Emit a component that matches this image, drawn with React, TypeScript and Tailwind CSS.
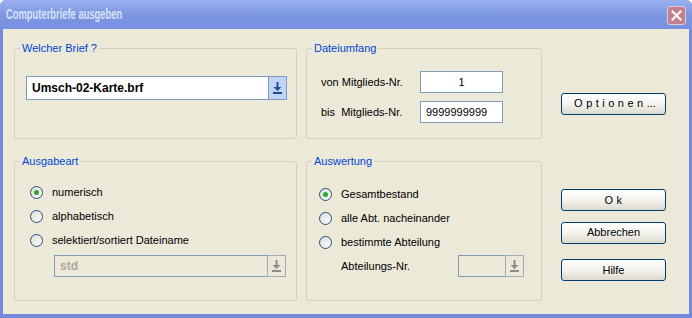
import React from 'react';

const FONT = { fontFamily: '"Liberation Sans", Arial, sans-serif' };

const ArrowIcon: React.FC<{ color: string }> = ({ color }) => (
  <svg width="9" height="12" viewBox="0 0 9 12">
    <rect x="3.5" y="0" width="2" height="6" fill={color} />
    <polygon points="0.5,5 8.5,5 4.5,9" fill={color} />
    <rect x="0" y="10" width="9" height="2" fill={color} />
  </svg>
);

const Radio: React.FC<{ checked?: boolean }> = ({ checked }) => (
  <span className="w-[13px] h-[13px] shrink-0 rounded-full border border-[#1C5180] bg-linear-to-br from-[#DCDBD3] to-white flex items-center justify-center">
    {checked && <span className="w-[5px] h-[5px] rounded-full bg-[#2FA72F]" />}
  </span>
);

const XpButton: React.FC<{ children: React.ReactNode; wide?: boolean }> = ({ children, wide }) => (
  <button
    className={`w-[105px] h-[22px] rounded-[3px] border border-[#003C74] bg-linear-to-b from-white via-[#F4F3EE] to-[#DCD9CD] text-[11px] text-black leading-none ${wide ? 'tracking-[3.5px] pl-[3px]' : ''}`}
  >
    {children}
  </button>
);

const Group: React.FC<{ title: string; className: string; children: React.ReactNode }> = ({ title, className, children }) => (
  <fieldset className={`border border-[#D0D0BF] rounded-[3px] ${className}`}>
    <legend className="ml-[5px] px-[2px] text-[11px] leading-[13px] text-[#0046D5]">{title}</legend>
    {children}
  </fieldset>
);

const RadioRow: React.FC<{ checked?: boolean; label: string }> = ({ checked, label }) => (
  <div className="h-[24px] flex items-center gap-[9px]">
    <Radio checked={checked} />
    <span className="text-[11px] text-black">{label}</span>
  </div>
);

export default function App() {
  return (
    <div
      className="w-[692px] h-[318px] flex flex-col bg-[#7488DE] overflow-hidden rounded-t-[6px]"
      style={FONT}
    >
      {/* Title bar */}
      <div className="h-[29px] shrink-0 flex items-center justify-between pl-[6px] pr-[6px] bg-linear-to-b from-[#9AB0EE] via-[#7D96E2] to-[#7790E0]">
        <span className="inline-block origin-left scale-x-[0.67] text-[14px] font-bold text-[#D8E2F7] whitespace-nowrap">
          Computerbriefe ausgeben
        </span>
        <div className="w-[19px] h-[19px] mt-[2px] rounded-[3px] border border-[#E4C8D2] bg-[#C2808E] flex items-center justify-center">
          <svg width="11" height="11" viewBox="0 0 11 11">
            <path d="M1.5 1.5 L9.5 9.5 M9.5 1.5 L1.5 9.5" stroke="white" strokeWidth="2" strokeLinecap="square" />
          </svg>
        </div>
      </div>

      {/* Body */}
      <div className="flex-1 mx-[3px] mb-[4px] bg-[#ECE9D8] pl-[11px] pt-[13px] flex flex-col gap-[16px]">
        {/* Row 1 */}
        <div className="flex">
          <Group title="Welcher Brief ?" className="w-[283px] h-[97px]">
            <div className="mt-[21px] ml-[11px] flex h-[24px]">
              <div className="w-[242px] h-full bg-white border border-[#7F9DB9] border-r-0 flex items-center pl-[5px] text-[12px] font-bold text-black">
                Umsch-02-Karte.brf
              </div>
              <div className="w-[19px] h-full bg-[#C1D3FB] border border-[#7F9DB9] flex items-center justify-center">
                <ArrowIcon color="#1E4E92" />
              </div>
            </div>
          </Group>

          <Group title="Dateiumfang" className="ml-[9px] w-[236px] h-[97px]">
            <div className="mt-[16px] ml-[14px] flex flex-col gap-[8px]">
              <div className="flex items-center">
                <span className="w-[99px] text-[11px] text-black">von Mitglieds-Nr.</span>
                <div className="w-[83px] h-[22px] bg-white border border-[#7F9DB9] flex items-center justify-center text-[11px] text-black">
                  1
                </div>
              </div>
              <div className="flex items-center">
                <span className="w-[99px] text-[11px] text-black whitespace-pre">bis  Mitglieds-Nr.</span>
                <div className="w-[83px] h-[22px] bg-white border border-[#7F9DB9] flex items-center pl-[5px] text-[11px] text-black">
                  9999999999
                </div>
              </div>
            </div>
          </Group>

          <div className="ml-[19px] pt-[48px]">
            <XpButton wide>
              Optionen<span className="tracking-normal">...</span>
            </XpButton>
          </div>
        </div>

        {/* Row 2 */}
        <div className="flex">
          <Group title="Ausgabeart" className="w-[283px] h-[146px]">
            <div className="mt-[12px] ml-[15px] flex flex-col">
              <RadioRow checked label="numerisch" />
              <RadioRow label="alphabetisch" />
              <RadioRow label="selektiert/sortiert Dateiname" />
            </div>
            <div className="mt-[3px] ml-[39px] flex h-[22px]">
              <div className="w-[213px] h-full border border-[#7F9DB9] border-r-0 flex items-center pl-[5px] text-[12px] font-bold text-[#ACA899]">
                std
              </div>
              <div className="w-[19px] h-full border border-[#A5ACB2] flex items-center justify-center">
                <ArrowIcon color="#8C8C8C" />
              </div>
            </div>
          </Group>

          <Group title="Auswertung" className="ml-[9px] w-[236px] h-[146px]">
            <div className="mt-[14px] ml-[12px] flex flex-col">
              <RadioRow checked label="Gesamtbestand" />
              <RadioRow label="alle Abt. nacheinander" />
              <RadioRow label="bestimmte Abteilung" />
            </div>
            <div className="mt-[1px] ml-[34px] flex items-center h-[22px]">
              <span className="w-[117px] text-[11px] text-black">Abteilungs-Nr.</span>
              <div className="w-[47px] h-full border border-[#7F9DB9] border-r-0" />
              <div className="w-[19px] h-full border border-[#A5ACB2] flex items-center justify-center">
                <ArrowIcon color="#8C8C8C" />
              </div>
            </div>
          </Group>

          <div className="ml-[19px] pt-[34px] flex flex-col">
            <XpButton wide>Ok</XpButton>
            <div className="mt-[8px]">
              <XpButton>Abbrechen</XpButton>
            </div>
            <div className="mt-[13px]">
              <XpButton>Hilfe</XpButton>
            </div>
          </div>
        </div>
      </div>
    </div>
  );
}
